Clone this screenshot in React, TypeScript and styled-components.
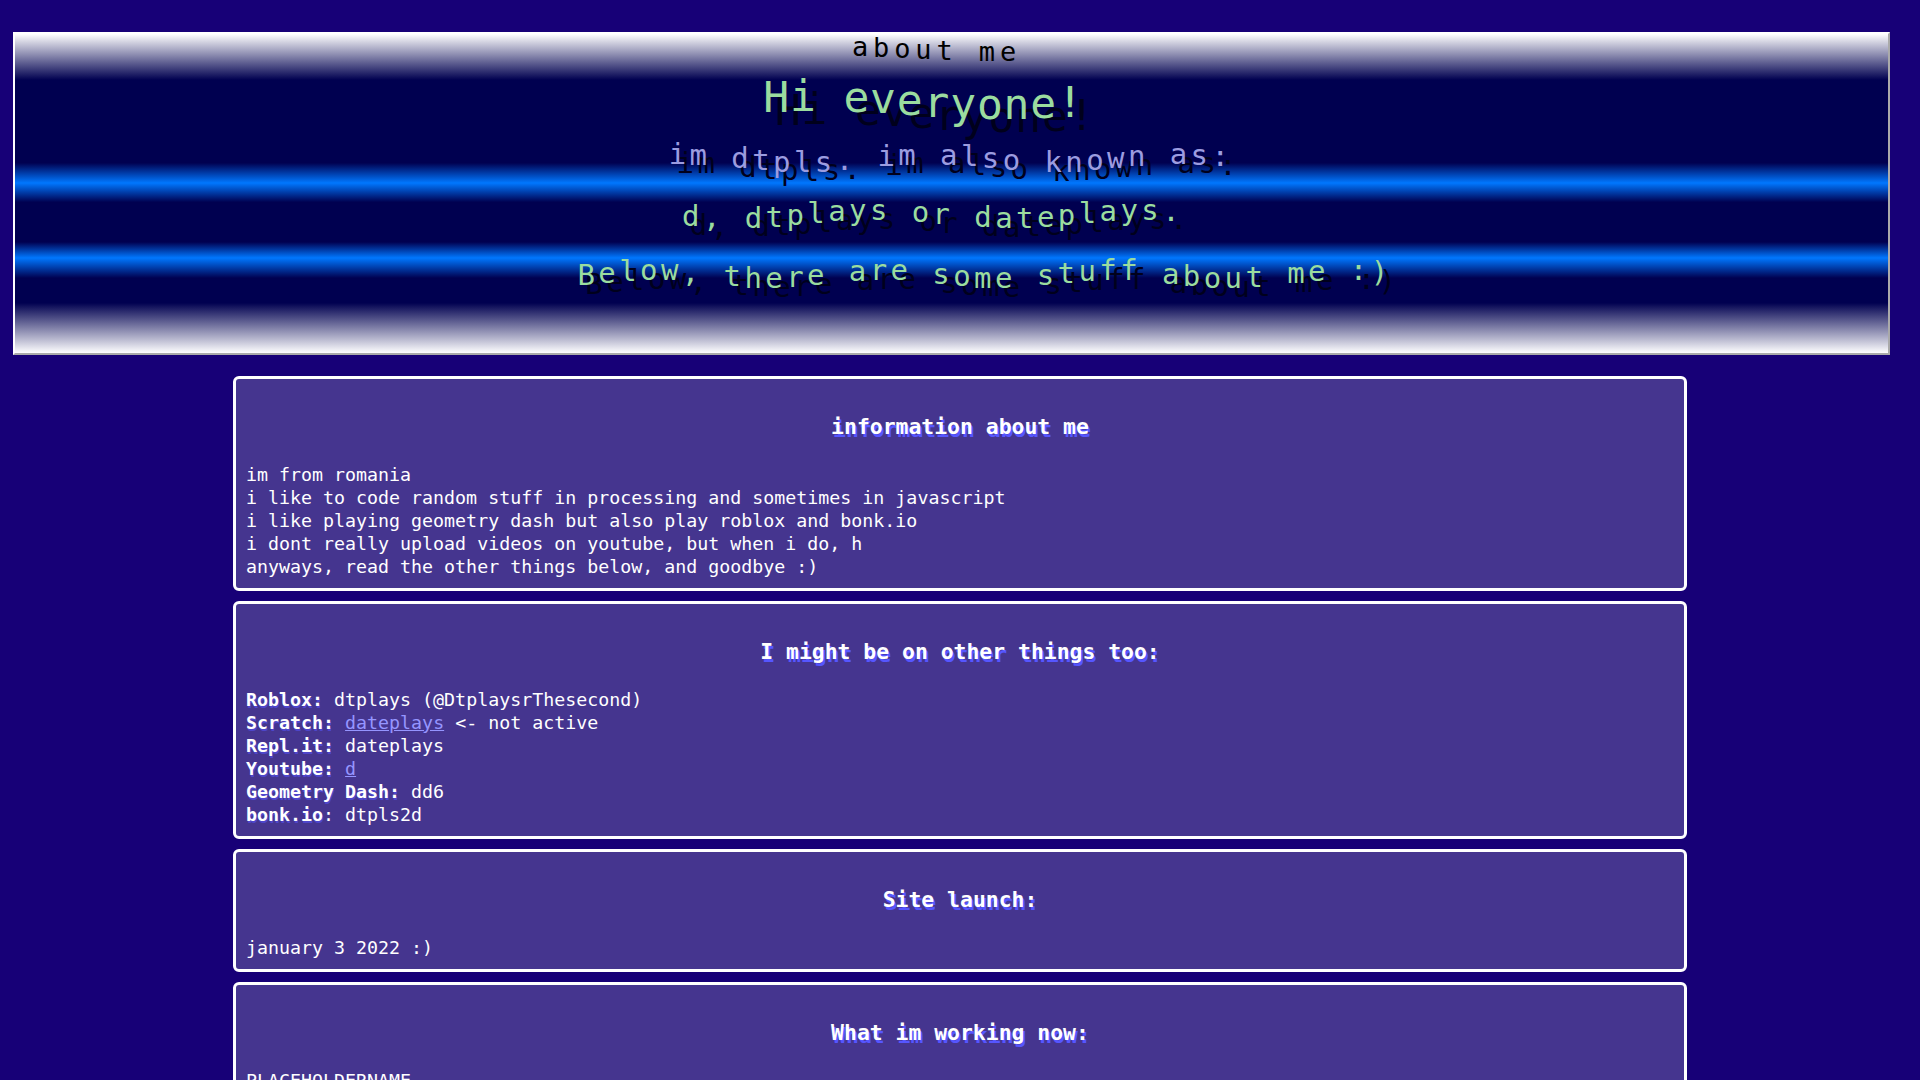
import React from 'react';
import styled, { createGlobalStyle } from 'styled-components';

const GlobalStyle = createGlobalStyle`
  body {
    margin: 8px;
    background: #170077;
    font-family: "DejaVu Sans Mono", "Liberation Mono", monospace;
    color: #fff;
  }
`;

const Banner = styled.header`
  margin: 24px 22px 0 5px;
  padding: 0 0 62px;
  border-style: solid;
  border-width: 2px;
  border-color: #fff #aaa #aaa #fff;
  display: flex;
  flex-direction: column;
  align-items: center;
  background: linear-gradient(
    to bottom,
    #ffffff 0%,
    #000050 14.4%,
    #000050 40.4%,
    #0077ff 46.7%,
    #000050 52.7%,
    #000050 65.2%,
    #0077ff 70.2%,
    #000050 76.5%,
    #000050 84.3%,
    #ffffff 100%
  );
`;

const WaveLine = styled.div<{ $size: number; $color: string; $gap: number; $shift: number; $mt: number; $shadow: boolean }>`
  margin-top: ${(p) => p.$mt}px;
  font-size: ${(p) => p.$size}px;
  letter-spacing: ${(p) => p.$gap}px;
  color: ${(p) => p.$color};
  transform: translateX(${(p) => p.$shift}px);
  white-space: pre;
  text-shadow: ${(p) => (p.$shadow ? '0.27em 0.3em #00001c' : 'none')};
`;

const Letter = styled.span`
  display: inline-block;
  white-space: pre;
`;

interface WaveProps {
  text: string;
  size: number;
  color: string;
  gap: number;
  shift: number;
  mt: number;
  amp: number;
  period: number;
  phase: number;
  shadow?: boolean;
}

const Wave: React.FC<WaveProps> = ({ text, size, color, gap, shift, mt, amp, period, phase, shadow = true }) => (
  <WaveLine $size={size} $color={color} $gap={gap} $shift={shift} $mt={mt} $shadow={shadow}>
    {text.split('').map((ch, i) => (
      <Letter key={i} style={{ transform: `translateY(${(amp * Math.sin(((i + phase) / period) * Math.PI * 2)).toFixed(1)}px)` }}>
        {ch}
      </Letter>
    ))}
  </WaveLine>
);

const Panels = styled.main`
  margin-top: 21px;
`;

const Panel = styled.section`
  width: 75%;
  margin: 0 auto 10px;
  padding: 10px;
  border: 3px solid #fff;
  border-radius: 6px;
  background: #45358f;
  font-size: 18.3px;
  line-height: 23px;
`;

const Title = styled.h3`
  margin: 25px 0 24px;
  font-size: 1.17em;
  line-height: 25px;
  text-align: center;
  text-shadow: 2px 3px #5656ff;
`;

const Label = styled.b`
  text-shadow: 1px 2px rgba(86, 86, 255, 0.55);
`;

const Link = styled.a`
  color: #9595ff;
  text-decoration: underline;
`;

const App: React.FC = () => (
  <>
    <GlobalStyle />
    <Banner>
      <Wave text="about me" size={27} color="#000" gap={4.9} shift={-15} mt={-1} amp={3} period={16} phase={-2} shadow={false} />
      <Wave text="Hi everyone!" size={43} color="#9bdc9f" gap={0.8} shift={-28} mt={11} amp={4} period={14} phase={-5} />
      <Wave text="im dtpls. im also known as:" size={29} color="#9c9ce0" gap={3.4} shift={-1} mt={16} amp={4} period={12} phase={-3} />
      <Wave text="d, dtplays or dateplays." size={29} color="#9bdc9f" gap={3.4} shift={-19} mt={22} amp={4} period={13} phase={1} />
      <Wave text="Below, there are some stuff about me :)" size={29} color="#9bdc9f" gap={3.4} shift={33} mt={26} amp={4} period={11} phase={5} />
    </Banner>

    <Panels>
      <Panel>
        <Title>information about me</Title>
        im from romania<br />
        i like to code random stuff in processing and sometimes in javascript<br />
        i like playing geometry dash but also play roblox and bonk.io<br />
        i dont really upload videos on youtube, but when i do, h<br />
        anyways, read the other things below, and goodbye :)
      </Panel>

      <Panel>
        <Title>I might be on other things too:</Title>
        <Label>Roblox:</Label> dtplays (@DtplaysrThesecond)<br />
        <Label>Scratch:</Label> <Link href="#">dateplays</Link> &lt;- not active<br />
        <Label>Repl.it:</Label> dateplays<br />
        <Label>Youtube:</Label> <Link href="#">d</Link><br />
        <Label>Geometry Dash:</Label> dd6<br />
        <Label>bonk.io</Label>: dtpls2d
      </Panel>

      <Panel>
        <Title>Site launch:</Title>
        january 3 2022 :)
      </Panel>

      <Panel>
        <Title>What im working now:</Title>
        PLACEHOLDERNAME
      </Panel>
    </Panels>
  </>
);

export default App;
